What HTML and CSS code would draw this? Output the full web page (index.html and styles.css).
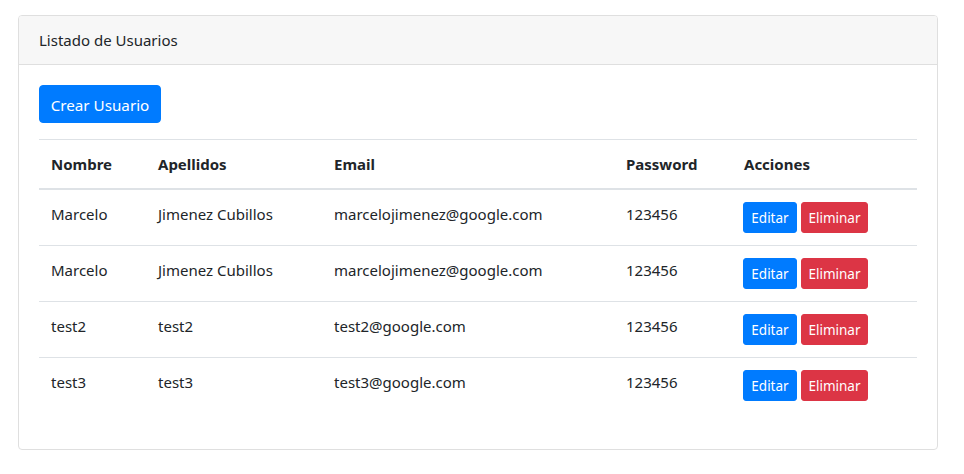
FILE: index.html
```html
<!DOCTYPE html>
<html lang="es">
<head>
<meta charset="utf-8">
<title>Listado de Usuarios</title>
<link rel="stylesheet" href="styles.css">
</head>
<body>
<div class="container">
  <div class="card">
    <div class="card-header">Listado de Usuarios</div>
    <div class="card-body">
      <button class="btn btn-primary btn-create">Crear Usuario</button>
      <table class="table">
        <colgroup>
          <col class="c1"><col class="c2"><col class="c3"><col class="c4"><col class="c5">
        </colgroup>
        <thead>
          <tr><th>Nombre</th><th>Apellidos</th><th>Email</th><th>Password</th><th>Acciones</th></tr>
        </thead>
        <tbody>
          <tr><td>Marcelo</td><td>Jimenez Cubillos</td><td>marcelojimenez@google.com</td><td>123456</td><td class="actions"><button class="btn btn-sm btn-primary btn-edit">Editar</button><button class="btn btn-sm btn-danger btn-del">Eliminar</button></td></tr>
          <tr><td>Marcelo</td><td>Jimenez Cubillos</td><td>marcelojimenez@google.com</td><td>123456</td><td class="actions"><button class="btn btn-sm btn-primary btn-edit">Editar</button><button class="btn btn-sm btn-danger btn-del">Eliminar</button></td></tr>
          <tr><td>test2</td><td>test2</td><td>test2@google.com</td><td>123456</td><td class="actions"><button class="btn btn-sm btn-primary btn-edit">Editar</button><button class="btn btn-sm btn-danger btn-del">Eliminar</button></td></tr>
          <tr><td>test3</td><td>test3</td><td>test3@google.com</td><td>123456</td><td class="actions"><button class="btn btn-sm btn-primary btn-edit">Editar</button><button class="btn btn-sm btn-danger btn-del">Eliminar</button></td></tr>
        </tbody>
      </table>
    </div>
  </div>
</div>
</body>
</html>
```
FILE: styles.css
```css
* { box-sizing: border-box; }
html, body { margin: 0; padding: 0; background: #fff; }
body {
  font-family: "Noto Sans", "Open Sans", sans-serif;
  font-size: 15px;
  line-height: 24px;
  color: #212529;
}
.container { padding: 15px 26px 0 18px; }
.card {
  border: 1px solid #dfdfdf;
  border-radius: 4px;
  background: #fff;
  overflow: hidden;
}
.card-header {
  background: #f7f7f7;
  border-bottom: 1px solid #dfdfdf;
  padding: 12px 20px;
  height: 49px;
}
.card-body { padding: 20px 19px 20px 20px; }
.btn {
  display: inline-block;
  font-family: inherit;
  border: 1px solid transparent;
  color: #fff;
  cursor: pointer;
  text-align: center;
  white-space: nowrap;
  padding: 0;
}
.btn-create {
  font-size: 15.2px;
  line-height: 24px;
  padding-top: 1px;
  border-radius: 4px;
  height: 38px;
  width: 122px;
  margin-bottom: 16px;
  vertical-align: top;
}
.btn-primary { background: #007bff; border-color: #007bff; }
.btn-danger { background: #dc3545; border-color: #dc3545; }
.btn-sm {
  font-size: 13.5px;
  line-height: 21px;
  padding-top: 1px;
  border-radius: 3px;
  height: 31px;
  vertical-align: top;
}
.table {
  width: 878px;
  border-collapse: collapse;
  table-layout: fixed;
  margin-bottom: 16px;
}
.c1 { width: 107px; }
.c2 { width: 176px; }
.c3 { width: 292px; }
.c4 { width: 118px; }
.c5 { width: 185px; }
.table th, .table td {
  text-align: left;
  vertical-align: top;
  padding: 12px;
  border-top: 1px solid #dee2e6;
  white-space: nowrap;
}
.table th { font-weight: 700; }
.table thead th { border-bottom: 2px solid #dee2e6; }
.table td.actions { padding-left: 11px; }
.btn-edit { width: 54px; margin-right: 4px; }
.btn-del { width: 67px; }
```
